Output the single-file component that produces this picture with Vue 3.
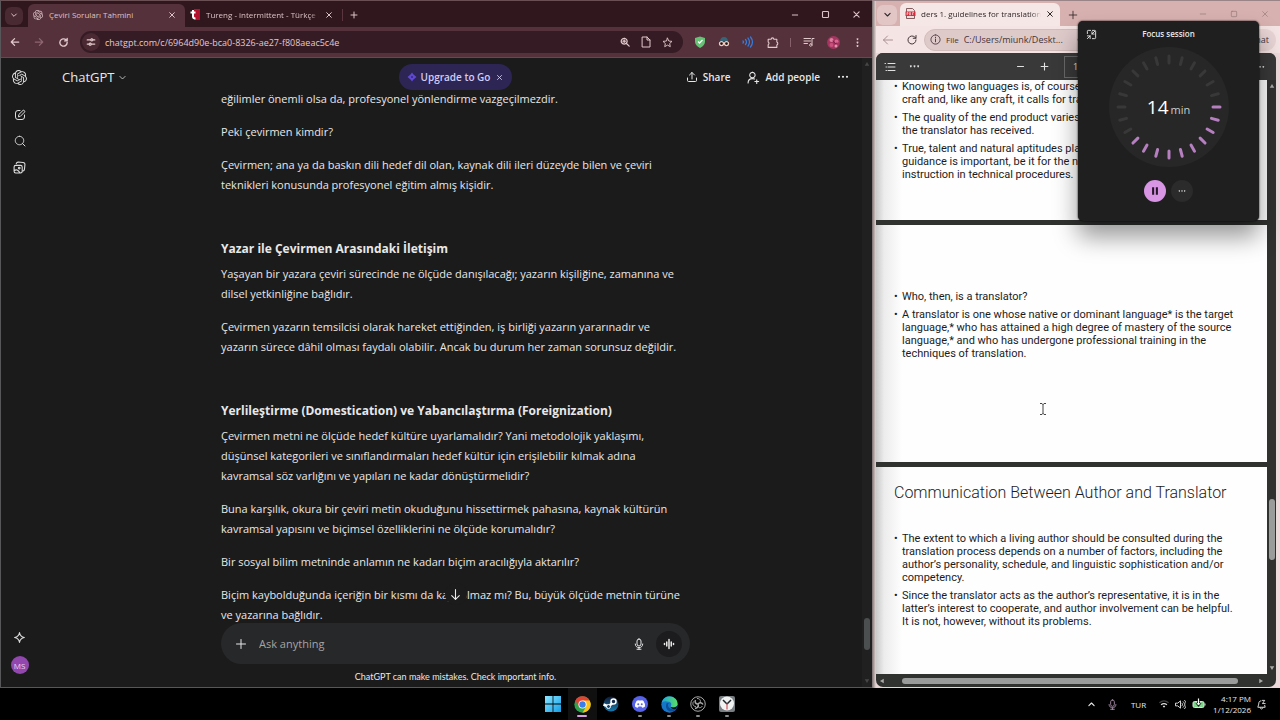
<script setup>
import { h } from 'vue'

const shapes = {
  down: 'M5 9l7 7 7-7',
  up: 'M5 15l7-7 7 7',
  close: 'M5 5l14 14M19 5L5 19',
  plus: 'M12 3v18M3 12h18',
  minus: 'M4 12h16',
  square: 'M6 4h12a2 2 0 0 1 2 2v12a2 2 0 0 1-2 2H6a2 2 0 0 1-2-2V6a2 2 0 0 1 2-2z',
  back: 'M21 12H3M11 4l-8 8 8 8',
  forward: 'M3 12h18M13 4l8 8-8 8',
  reload: 'M20 12a8 8 0 1 1-2.5-5.8L20 8.500M20 3v5.500h-5.500',
  tune: 'M3 7h8M17 7h4M3 17h4M13 17h8M14 4.500a2.500 2.500 0 1 0 .01 0M10 14.500a2.500 2.500 0 1 0 .01 0',
  zoomIn: 'M10 3a7 7 0 1 0 .01 0M15 15l7 7M10 7v6M7 10h6',
  page: 'M5 2h9l6 6v14H5zM14 2v6h6',
  star: 'M12 2.500l2.900 6.300 6.900.8-5.100 4.700 1.400 6.800L12 17.700l-6.100 3.400 1.400-6.800-5.100-4.700 6.900-.8z',
  puzzle: 'M4 6h5.500a2.500 2.500 0 0 1 5 0H20v5a3 3 0 0 1 0 5.500V21H4v-5a2.800 2.800 0 0 0 0-5z',
  music: 'M2 5h13M2 10h13M2 15h7M18 18V5h4M15.500 15.500a2.500 2.500 0 1 0 .01 0',
  share: 'M12 16V3M7 8l5-5 5 5M3 14v5a2 2 0 0 0 2 2h14a2 2 0 0 0 2-2v-5',
  person: 'M10 2.500a5 5 0 1 0 .01 0M2 22c0-5 3-8 8-8 1.500 0 3 .3 4 .8M18 16v7M14.500 19.500h7',
  compose: 'M12 3H8a5 5 0 0 0-5 5v8a5 5 0 0 0 5 5h8a5 5 0 0 0 5-5v-4M9 15l.7-4L18 2.800c1.700-1.500 4.700 1.500 3.200 3.200L13 14.300z',
  search: 'M11 2.500a8.500 8.500 0 1 0 .01 0M17 17l5 5',
  images: 'M5 8h9a3 3 0 0 1 3 3v8a3 3 0 0 1-3 3H5a3 3 0 0 1-3-3v-8a3 3 0 0 1 3-3zM6 5c.5-2 1.500-3 3.500-3l9 .8C21 3 22.200 4.500 22 7l-.8 8c-.2 2-1 3-2.500 3.500M2 18c4-3 7-2 11 4M11.500 11.500a1.500 1.500 0 1 0 .01 0',
  sparkle: 'M12 3c1 6 3 8 9 9-6 1-8 3-9 9-1-6-3-8-9-9 6-1 8-3 9-9z',
  mic: 'M12 2a4 4 0 0 1 4 4v6a4 4 0 0 1-8 0V6a4 4 0 0 1 4-4zM4.500 12c0 10 15 10 15 0M12 19v4M8 22.500h8',
  wave: 'M3 11v2M7.500 8v8M12 3v18M16.500 8v8M21 11v2',
  arrowDown: 'M12 3v18M5 14l7 7 7-7',
  list: 'M8 5h14M8 12h14M8 19h14M2 5h1M4 12h1M4 19h1',
  info: 'M12 2a10 10 0 1 0 .01 0M12 11v6M12 7v1',
  shrink: 'M3 10V5a2 2 0 0 1 2-2h5M14 3h5a2 2 0 0 1 2 2v14a2 2 0 0 1-2 2h-5M13 11l6-6M13 6v5h5M3 21l6-6M3 15h6v6',
  volume: 'M2 9h4l6-5v16l-6-5H2zM15 9c2 2 2 4 0 6M18 6c4 4 4 8 0 12M21 3c5 6 5 12 0 18',
  bell: 'M11 4C7 4 6 7 6 11l-2 7h16l-1-4M9 19c1 4 5 4 6 0M14 3h5l-5 7h6',
  openai: 'M22.2819 9.8211a5.9847 5.9847 0 0 0-.5157-4.9108 6.0462 6.0462 0 0 0-6.5098-2.9A6.0651 6.0651 0 0 0 4.9807 4.1818a5.9847 5.9847 0 0 0-3.9977 2.9 6.0462 6.0462 0 0 0 .7427 7.0966 5.98 5.98 0 0 0 .511 4.9107 6.051 6.051 0 0 0 6.5146 2.9001A5.9847 5.9847 0 0 0 13.2599 24a6.0557 6.0557 0 0 0 5.7718-4.2058 5.9894 5.9894 0 0 0 3.9977-2.9001 6.0557 6.0557 0 0 0-.7475-7.0729zm-9.022 12.6081a4.4755 4.4755 0 0 1-2.8764-1.0408l.1419-.0804 4.7783-2.7582a.7948.7948 0 0 0 .3927-.6813v-6.7369l2.02 1.1686a.071.071 0 0 1 .038.052v5.5826a4.504 4.504 0 0 1-4.4945 4.4944zm-9.6607-4.1254a4.4708 4.4708 0 0 1-.5346-3.0137l.142.0852 4.783 2.7582a.7712.7712 0 0 0 .7806 0l5.8428-3.3685v2.3324a.0804.0804 0 0 1-.0332.0615L9.74 19.9502a4.4992 4.4992 0 0 1-6.1408-1.6464zM2.3408 7.8956a4.485 4.485 0 0 1 2.3655-1.9728V11.6a.7664.7664 0 0 0 .3879.6765l5.8144 3.3543-2.0201 1.1685a.0757.0757 0 0 1-.071 0l-4.8303-2.7865A4.504 4.504 0 0 1 2.3408 7.872zm16.5963 3.8558L13.1038 8.364 15.1192 7.2a.0757.0757 0 0 1 .071 0l4.8303 2.7913a4.4944 4.4944 0 0 1-.6765 8.1042v-5.6772a.79.79 0 0 0-.407-.667zm2.0107-3.0231l-.142-.0852-4.7735-2.7818a.7759.7759 0 0 0-.7854 0L9.409 9.2297V6.8974a.0662.0662 0 0 1 .0284-.0615l4.8303-2.7866a4.4992 4.4992 0 0 1 6.6802 4.66zM8.3065 12.863l-2.02-1.1638a.0804.0804 0 0 1-.038-.0567V6.0742a4.4992 4.4992 0 0 1 7.3757-3.4537l-.142.0805L8.704 5.459a.7948.7948 0 0 0-.3927.6813zm1.0976-2.3654l2.602-1.4998 2.6069 1.4998v2.9994l-2.5974 1.4997-2.6067-1.4997Z',
  dots: 'M4 9.500a2 2 0 1 0 .01 0M12 9.500a2 2 0 1 0 .01 0M20 9.500a2 2 0 1 0 .01 0',
  dotsV: 'M12 2.500a2 2 0 1 0 .01 0M12 10a2 2 0 1 0 .01 0M12 17.500a2 2 0 1 0 .01 0',
  triUp: 'M12 4l9 15H3z',
  triDown: 'M12 20L3 5h18z',
  triLeft: 'M4 12L19 3v18z',
  triRight: 'M20 12L5 3v18z',
  pause: 'M5 3h5v18H5zM14 3h5v18h-5z',
}
const filled = ['openai', 'dots', 'dotsV', 'triUp', 'triDown', 'triLeft', 'triRight', 'pause']

const Icon = (props) =>
  h('svg', {
    viewBox: '0 0 24 24',
    width: props.size,
    height: props.size,
    'aria-hidden': 'true',
    fill: filled.includes(props.name) ? 'currentColor' : 'none',
    stroke: filled.includes(props.name) ? 'none' : 'currentColor',
    'stroke-width': props.weight || 2,
    'stroke-linecap': 'round',
    'stroke-linejoin': 'round',
  }, [h('path', { d: shapes[props.name] })])
Icon.props = ['name', 'size', 'weight']

const thread = [
  { lines: ['eğilimler önemli olsa da, profesyonel yönlendirme vazgeçilmezdir.'] },
  { lines: ['Peki çevirmen kimdir?'] },
  { lines: ['Çevirmen; ana ya da baskın dili hedef dil olan, kaynak dili ileri düzeyde bilen ve çeviri', 'teknikleri konusunda profesyonel eğitim almış kişidir.'] },
  { title: 'Yazar ile Çevirmen Arasındaki İletişim' },
  { lines: ['Yaşayan bir yazara çeviri sürecinde ne ölçüde danışılacağı; yazarın kişiliğine, zamanına ve', 'dilsel yetkinliğine bağlıdır.'] },
  { lines: ['Çevirmen yazarın temsilcisi olarak hareket ettiğinden, iş birliği yazarın yararınadır ve', 'yazarın sürece dâhil olması faydalı olabilir. Ancak bu durum her zaman sorunsuz değildir.'] },
  { title: 'Yerlileştirme (Domestication) ve Yabancılaştırma (Foreignization)' },
  { lines: ['Çevirmen metni ne ölçüde hedef kültüre uyarlamalıdır? Yani metodolojik yaklaşımı,', 'düşünsel kategorileri ve sınıflandırmaları hedef kültür için erişilebilir kılmak adına', 'kavramsal söz varlığını ve yapıları ne kadar dönüştürmelidir?'] },
  { lines: ['Buna karşılık, okura bir çeviri metin okuduğunu hissettirmek pahasına, kaynak kültürün', 'kavramsal yapısını ve biçimsel özelliklerini ne ölçüde korumalıdır?'] },
  { lines: ['Bir sosyal bilim metninde anlamın ne kadarı biçim aracılığıyla aktarılır?'] },
  { lines: ['Biçim kaybolduğunda içeriğin bir kısmı da kaybolmaz mı? Bu, büyük ölçüde metnin türüne', 've yazarına bağlıdır.'] },
]

const slides = [
  {
    kind: 'first',
    points: [
      ['Knowing two languages is, of course, not enough. It is a', 'craft and, like any craft, it calls for training.'],
      ['The quality of the end product varies with the training', 'the translator has received.'],
      ['True, talent and natural aptitudes play a role, but', 'guidance is important, be it for the novice or for', 'instruction in technical procedures.'],
    ],
  },
  {
    kind: 'second',
    points: [
      ['Who, then, is a translator?'],
      ['A translator is one whose native or dominant language* is the target', 'language,* who has attained a high degree of mastery of the source', 'language,* and who has undergone professional training in the', 'techniques of translation.'],
    ],
  },
  {
    kind: 'third',
    title: 'Communication Between Author and Translator',
    points: [
      ['The extent to which a living author should be consulted during the', 'translation process depends on a number of factors, including the', 'author’s personality, schedule, and linguistic sophistication and/or', 'competency.'],
      ['Since the translator acts as the author’s representative, it is in the', 'latter’s interest to cooperate, and author involvement can be helpful.', 'It is not, however, without its problems.'],
    ],
  },
]

const ticks = Array.from({ length: 24 }, (_, i) => ({ angle: i * 15, lit: i >= 6 && i <= 15 }))
</script>

<template>
  <div class="desktop">
    <div class="windows">
      <section class="chrome" aria-label="Chrome">
        <div class="tabstrip">
          <button class="tabmenu" aria-label="Search tabs"><Icon name="down" size="8" weight="3" /></button>
          <div class="tab active">
            <Icon name="openai" size="10" />
            <span class="tabname">Çeviri Soruları Tahmini</span>
            <button aria-label="Close tab"><Icon name="close" size="8" weight="3" /></button>
          </div>
          <div class="tab">
            <svg width="10" height="11" viewBox="0 0 20 22" aria-hidden="true"><path d="M8 0h12v22H8z" fill="#b3122e" /><path d="M6 2v13q0 4 5 4M1 7h10" fill="none" stroke="#fff" stroke-width="4" /></svg>
            <span class="tabname fade">Tureng - intermittent - Türkçe İ</span>
            <button aria-label="Close tab"><Icon name="close" size="8" weight="3" /></button>
          </div>
          <button class="newtab" aria-label="New tab"><Icon name="plus" size="8" weight="3" /></button>
          <div class="controls">
            <button aria-label="Minimize"><Icon name="minus" size="8" weight="3" /></button>
            <button aria-label="Maximize"><Icon name="square" size="9" weight="3" /></button>
            <button aria-label="Close"><Icon name="close" size="9" weight="3" /></button>
          </div>
        </div>
        <div class="toolbar">
          <button aria-label="Back"><Icon name="back" size="10" weight="3" /></button>
          <button class="off" aria-label="Forward"><Icon name="forward" size="10" weight="3" /></button>
          <button aria-label="Reload"><Icon name="reload" size="11" weight="3" /></button>
          <div class="address">
            <button class="site" aria-label="Site information"><Icon name="tune" size="10" weight="3" /></button>
            <input aria-label="Address" value="chatgpt.com/c/6964d90e-bca0-8326-ae27-f808aeac5c4e">
            <button aria-label="Zoom"><Icon name="zoomIn" size="10" weight="3" /></button>
            <button aria-label="Reading mode"><Icon name="page" size="12" weight="2" /></button>
            <button aria-label="Bookmark"><Icon name="star" size="11" weight="2" /></button>
          </div>
          <div class="extensions">
            <button aria-label="Ad blocker"><svg width="12" height="12" viewBox="0 0 24 24"><path d="M12 1l10 3v7c0 6-4 10-10 13C6 21 2 17 2 11V4z" fill="#66c274" /><path d="M8 11l3 3 6-6" fill="none" stroke="#fff" stroke-width="2.500" /></svg></button>
            <button aria-label="Incognito tools"><svg width="12" height="12" viewBox="0 0 24 24"><path d="M4 10q1-8 8-8t8 8z" fill="#376477" /><path d="M2 10h20v5H2z" fill="#252932" /><g fill="#17191e" stroke="#f2c9bd" stroke-width="2.500"><circle cx="7" cy="15" r="4" /><circle cx="17" cy="15" r="4" /></g></svg></button>
            <button aria-label="Read aloud"><svg width="12" height="12" viewBox="0 0 24 24" fill="none" stroke="#377bdc" stroke-width="2.500" stroke-linecap="round"><path d="M2 10q2 2 0 4M7 7q4 5 0 10M12 4q6 8 0 16M17 2q8 10 0 20" /></svg></button>
            <button aria-label="Extensions"><Icon name="puzzle" size="13" weight="2" /></button>
            <span class="rule"></span>
            <button aria-label="Media"><Icon name="music" size="12" weight="2" /></button>
            <button aria-label="Profile"><svg width="13" height="13" viewBox="0 0 26 26"><circle cx="13" cy="13" r="13" fill="#a53560" /><circle cx="9" cy="8" r="4" fill="#dd7f9f" /><circle cx="19" cy="11" r="4" fill="#d9668f" /><circle cx="9" cy="18" r="4" fill="#c9527d" /><circle cx="18" cy="20" r="3" fill="#e294ae" /><path d="M12 9l4 6 5-1" fill="none" stroke="#7b1d45" stroke-width="2" /></svg></button>
            <button aria-label="Menu"><Icon name="dotsV" size="11" /></button>
          </div>
        </div>

        <div class="chat">
          <nav class="rail" aria-label="Sidebar">
            <button aria-label="Home"><Icon name="openai" size="15" /></button>
            <button class="first" aria-label="New chat"><Icon name="compose" size="12" weight="2" /></button>
            <button aria-label="Search chats"><Icon name="search" size="12" weight="2" /></button>
            <button aria-label="Images"><Icon name="images" size="13" weight="2" /></button>
            <button class="last" aria-label="Upgrade"><Icon name="sparkle" size="13" weight="2" /></button>
            <button class="avatar">MS</button>
          </nav>
          <main class="main">
            <header class="head">
              <button class="model">ChatGPT <Icon name="down" size="9" weight="2" /></button>
              <div class="upgrade">
                <button><svg width="10" height="10" viewBox="0 0 20 20"><path d="M10 1l3 4 6 5-6 5-3 4-3-4-6-5 6-5z" fill="#6048d3" /><circle cx="10" cy="10" r="2" fill="#362a78" /></svg>Upgrade to Go</button>
                <button aria-label="Dismiss"><Icon name="close" size="7" weight="3" /></button>
              </div>
              <div class="actions">
                <button><Icon name="share" size="12" weight="2" />Share</button>
                <button><Icon name="person" size="13" weight="2" />Add people</button>
                <button aria-label="More"><Icon name="dots" size="12" /></button>
              </div>
            </header>
            <div class="scroll">
              <article class="column">
                <template v-for="(block, i) in thread" :key="i">
                  <h3 v-if="block.title">{{ block.title }}</h3>
                  <p v-else><span v-for="line in block.lines" :key="line">{{ line }}</span></p>
                </template>
              </article>
              <button class="jump" aria-label="Scroll to bottom"><Icon name="arrowDown" size="13" weight="2" /></button>
            </div>
            <form class="composer column" @submit.prevent>
              <button type="button" aria-label="Attach"><Icon name="plus" size="12" weight="2" /></button>
              <input aria-label="Message" placeholder="Ask anything">
              <button type="button" aria-label="Dictate"><Icon name="mic" size="12" weight="2" /></button>
              <button type="button" class="voice" aria-label="Voice mode"><Icon name="wave" size="12" weight="3" /></button>
            </form>
            <p class="note">ChatGPT can make mistakes. Check important info.</p>
          </main>
          <div class="bar chatbar" aria-hidden="true"><Icon name="triUp" size="6" /><i></i><Icon name="triDown" size="6" /></div>
        </div>
      </section>

      <section class="edge" aria-label="Edge">
        <div class="tabstrip">
          <button class="tabmenu" aria-label="Tab actions"><Icon name="down" size="9" weight="3" /></button>
          <div class="tab active">
            <svg width="11" height="11" viewBox="0 0 22 22"><path d="M3 1h12l4 4v16H3z" fill="#f3dede" stroke="#5c3135" stroke-width="1.500" /><path d="M1 7h20v9H1z" fill="#d22c3d" /><path d="M4 14V9h2v3H4M9 9v5h2V9zM15 14V9h3M15 12h2" fill="none" stroke="#fff" /></svg>
            <span class="tabname fade">ders 1. guidelines for translation o</span>
            <button aria-label="Close tab"><Icon name="close" size="8" weight="3" /></button>
          </div>
          <button class="newtab" aria-label="New tab"><Icon name="plus" size="10" weight="2" /></button>
          <div class="controls">
            <button aria-label="Minimize"><Icon name="minus" size="8" weight="2" /></button>
            <button aria-label="Maximize"><Icon name="square" size="8" weight="2" /></button>
            <button aria-label="Close"><Icon name="close" size="8" weight="2" /></button>
          </div>
        </div>
        <div class="toolbar">
          <button class="off" aria-label="Back"><Icon name="back" size="12" weight="2" /></button>
          <button aria-label="Reload"><Icon name="reload" size="12" weight="2" /></button>
          <div class="address">
            <Icon name="info" size="11" weight="2" /><span class="scheme">File</span>
            <input aria-label="Address" value="C:/Users/miunk/Deskt...">
            <button aria-label="Search page"><Icon name="search" size="10" weight="2" /></button>
          </div>
          <button class="copilot">Chat</button>
        </div>
        <div class="viewer">
          <div class="pdfbar">
            <button aria-label="Contents"><Icon name="list" size="12" weight="2" /></button>
            <button aria-label="More tools"><Icon name="dots" size="11" /></button>
            <button class="zoomout" aria-label="Zoom out"><Icon name="minus" size="9" weight="3" /></button>
            <button aria-label="Zoom in"><Icon name="plus" size="9" weight="3" /></button>
            <input aria-label="Page" value="18">
            <button class="moreright" aria-label="More"><Icon name="dots" size="10" /></button>
          </div>
          <div class="docrow">
            <div class="pages">
              <article v-for="slide in slides" :key="slide.kind" class="slide" :class="slide.kind">
                <h2 v-if="slide.title">{{ slide.title }}</h2>
                <ul>
                  <li v-for="(point, i) in slide.points" :key="i"><span v-for="line in point" :key="line">{{ line }}</span></li>
                </ul>
              </article>
              <svg class="caret" width="8" height="12" viewBox="0 0 8 12" fill="none" stroke="#444"><path d="M1 .5h2l1 1 1-1h2M4 1v10M1 11.500h2l1-1 1 1h2" /></svg>
            </div>
            <div class="bar pdfscroll" aria-hidden="true"><Icon name="triUp" size="6" /><i></i><Icon name="triDown" size="6" /></div>
          </div>
          <div class="hbar" aria-hidden="true"><Icon name="triLeft" size="6" /><i></i><Icon name="triRight" size="6" /></div>
        </div>
      </section>
    </div>

    <aside class="focus" aria-label="Focus session">
      <button class="compact" aria-label="Back to full view"><Icon name="shrink" size="11" weight="2" /></button>
      <h2>Focus session</h2>
      <div class="dial">
        <svg viewBox="0 0 120 120" aria-hidden="true">
          <circle cx="60" cy="60" r="60" fill="#272727" />
          <line v-for="t in ticks" :key="t.angle" x1="60" y1="9" x2="60" y2="16" stroke-width="3" stroke-linecap="round" :stroke="t.lit ? '#b57fc0' : '#383838'" :transform="`rotate(${t.angle} 60 60)`" />
        </svg>
        <p><b>14</b><span>min</span></p>
      </div>
      <div class="focusbtns">
        <button class="pause" aria-label="Pause"><Icon name="pause" size="10" /></button>
        <button aria-label="More options"><Icon name="dots" size="8" /></button>
      </div>
    </aside>

    <footer class="taskbar">
      <div class="apps">
        <button aria-label="Start"><svg width="16" height="16" viewBox="0 0 16 16"><defs><linearGradient id="win" x1="0" y1="0" x2="1" y2="1"><stop stop-color="#8be6ff" /><stop offset="1" stop-color="#119fe6" /></linearGradient></defs><path d="M0 0h7.600v7.600H0zM8.400 0H16v7.600H8.400zM0 8.400h7.600V16H0zM8.400 8.400H16V16H8.400z" fill="url(#win)" /></svg></button>
        <button class="current" aria-label="Chrome"><svg width="17" height="17" viewBox="0 0 48 48"><circle cx="24" cy="24" r="23" fill="#2fa24c" /><path d="M24 24L4 12.500A23 23 0 0 1 44 12.500z" fill="#e34335" /><path d="M24 12.500h20A23 23 0 0 1 24 47l10-17z" fill="#fbc117" /><path d="M4 12.500L14 30 24 13z" fill="#e34335" /><circle cx="24" cy="24" r="11.500" fill="#fff" /><circle cx="24" cy="24" r="9" fill="#3b7de9" /></svg></button>
        <button aria-label="Steam"><svg width="16" height="16" viewBox="0 0 32 32"><defs><linearGradient id="steam" x1="0" y1="0" x2="0" y2="1"><stop stop-color="#101b38" /><stop offset="1" stop-color="#167bad" /></linearGradient></defs><circle cx="16" cy="16" r="15" fill="url(#steam)" /><path d="M1 17l10 4 9-8" fill="none" stroke="#fff" stroke-width="5" /><circle cx="21" cy="11" r="5" fill="#15294b" stroke="#fff" stroke-width="3" /><circle cx="11" cy="21" r="4" fill="#15476c" stroke="#fff" stroke-width="2" /></svg></button>
        <button class="running" aria-label="Discord"><svg width="16" height="16" viewBox="0 0 32 32"><circle cx="16" cy="16" r="16" fill="#5663e8" /><path d="M9 10q3-2 5-1h4q3-1 5 1 4 6 3 11-3 3-6 2l-1-2h-6l-1 2q-3 1-6-2-1-5 3-11z" fill="#fff" /><circle cx="12.500" cy="16.500" r="2" fill="#5663e8" /><circle cx="19.500" cy="16.500" r="2" fill="#5663e8" /></svg></button>
        <button class="running" aria-label="Edge"><svg width="17" height="17" viewBox="0 0 32 32"><defs><linearGradient id="edge" x1="0" y1="0" x2="1" y2="0"><stop stop-color="#1ba6e0" /><stop offset="1" stop-color="#5be060" /></linearGradient></defs><circle cx="16" cy="16" r="15.500" fill="#1676c8" /><path d="M1 14C3 4 10 0 17 1c9 1 15 7 14 15-1 5-8 7-13 4 3-4 1-9-4-9C8 9 3 10 1 14z" fill="url(#edge)" /><path d="M11 13c-5 8 2 18 11 16 4-1 6-3 7-5-5 2-15 2-16-7 0-2 1-3 2-4z" fill="#0c4f9b" /><path d="M18 20c3 2 9 3 13-2l-2 6c-5 2-10 0-11-4z" fill="#07131c" /></svg></button>
        <button class="running" aria-label="OBS"><svg width="16" height="16" viewBox="0 0 32 32" fill="none" stroke="#a9a9a9" stroke-width="2"><circle cx="16" cy="16" r="14.500" /><path d="M16 16c-5 0-7-4-5-8M16 16c3-4 8-3 10 1M16 16c2 5-1 8-6 9" stroke-width="3" /><path d="M7 11c-3 6 0 10 5 10M14 5c6 0 8 4 6 8M25 20c-4 5-8 4-9 0" /></svg></button>
        <button class="running" aria-label="Clock"><svg width="16" height="16" viewBox="0 0 32 32"><rect width="32" height="32" rx="4" fill="#777d80" /><circle cx="16" cy="15" r="14" fill="#f1f2f2" /><path d="M16 16L8 8M16 16l8-8" stroke="#20252a" stroke-width="3" /><path d="M16 14v13" stroke="#c8373e" stroke-width="2" /></svg></button>
      </div>
      <div class="tray">
        <button aria-label="Hidden icons"><Icon name="up" size="9" weight="3" /></button>
        <button class="traymic" aria-label="Microphone"><Icon name="mic" size="11" weight="2" /></button>
        <button class="lang">TUR</button>
        <button class="status" aria-label="Network, volume, battery">
          <svg width="10" height="10" viewBox="0 0 24 24" fill="none" stroke-width="3"><path d="M1 9q11-9 22 0" stroke="#444" /><path d="M5 14q7-6 14 0" stroke="#ddd" /><path d="M9 17q3-2 6 0l-3 4z" fill="#eee" /></svg>
          <Icon name="volume" size="11" weight="2" />
          <svg width="14" height="12" viewBox="0 0 28 24"><rect x="2" y="7" width="22" height="12" rx="3" fill="#7fd48b" stroke="#d5e8d6" stroke-width="2" /><path d="M26 11v4" stroke="#d5e8d6" stroke-width="2" /><path d="M13 1v12M9 9l4 5 4-5" fill="none" stroke="#103015" stroke-width="5" /><path d="M13 1v12M9 9l4 5 4-5" fill="none" stroke="#fff" stroke-width="2" /></svg>
        </button>
        <button class="clock"><span>4:17 PM</span><span>1/12/2026</span></button>
        <button aria-label="Notifications"><Icon name="bell" size="11" weight="2" /></button>
      </div>
    </footer>
  </div>
</template>

<style>
html, body { margin: 0; background: #000; }
</style>

<style scoped>
.desktop { position: relative; display: flex; flex-direction: column; height: 100vh; overflow: hidden; font-family: "Open Sans", "Noto Sans", sans-serif; font-size: 9px; color: #e8e8e8; }
.windows { flex: 1; min-height: 0; display: grid; grid-template-columns: 109fr 51fr; }
* { box-sizing: border-box; }
button, input { font: inherit; color: inherit; background: none; border: 0; padding: 0; margin: 0; min-width: 0; }
button { display: inline-flex; align-items: center; justify-content: center; white-space: nowrap; flex: none; }
input { outline: 0; }
svg { flex: none; display: block; }
p, h2, h3, ul { margin: 0; padding: 0; }

.chrome { display: flex; flex-direction: column; min-width: 0; min-height: 0; border: 1px solid #57575a; border-top-color: #6a4f55; border-right: 0; background: #1b1b1c; }
.tabstrip { display: flex; align-items: center; flex: none; height: 26px; padding: 3px 0 0 4px; background: #2f171d; color: #ddc3c7; }
.tabmenu { width: 18px; height: 18px; border-radius: 6px; background: #492932; margin-right: 5px; padding-bottom: 2px; }
.tab { display: flex; align-items: center; gap: 6px; height: 23px; width: 157px; padding: 0 9px 2px 5px; border-radius: 6px 6px 0 0; font-size: 8px; }
.tab.active { background: #54313b; }
.tab .tabname { flex: 1; overflow: hidden; white-space: nowrap; }
.fade { mask-image: linear-gradient(90deg, #000 92%, transparent); }
.chrome .newtab { width: 22px; height: 12px; border-left: 1px solid #5a353f; margin: 0 0 2px; }
.controls { display: flex; margin-left: auto; padding-bottom: 2px; }
.controls button { width: 31px; height: 20px; }
.toolbar { display: flex; align-items: center; flex: none; height: 31px; padding: 0 3px 0 2px; background: #54313b; color: #e2c9cd; border-bottom: 1px solid #684750; }
.toolbar > button { width: 24px; height: 22px; }
.toolbar .off { color: #8d6670; }
.address { flex: 1; display: flex; align-items: center; gap: 10px; min-width: 0; height: 22px; margin-left: 5px; padding: 0 10px 0 2px; border-radius: 11px; background: #351b23; }
.address input { flex: 1; text-overflow: clip; }
.address .site { width: 18px; height: 18px; border-radius: 9px; background: #4b2933; margin-right: -5px; }
.extensions { display: flex; align-items: center; padding-left: 5px; }
.extensions button { width: 24px; height: 20px; }
.rule { width: 1px; height: 9px; margin: 0 6px; background: #86606a; }

.chat { position: relative; flex: 1; display: flex; min-height: 0; }
.rail { width: 38px; flex: none; display: flex; flex-direction: column; align-items: center; padding: 6px 1px 13px 0; color: #dcdcdc; }
.rail button { width: 26px; height: 26px; }
.rail .first { margin-top: 12px; }
.rail .last { margin-top: auto; }
.rail .avatar { width: 18px; height: 18px; margin-top: 6px; border-radius: 9px; background: #9147ad; color: #ecd3f1; font-size: 8px; }
.main { flex: 1; min-width: 0; display: flex; flex-direction: column; }
.head { display: grid; grid-template-columns: 1fr auto 1fr; align-items: center; flex: none; height: 31px; padding: 6px 23px 0 23px; }
.model { justify-self: start; gap: 4px; font-size: 13px; }
.upgrade { display: flex; gap: 6px; height: 26px; padding: 0 9px 0 8px; border-radius: 13px; background: #2d2554; color: #d3cdf5; font-size: 10px; font-weight: 600; }
.upgrade button { gap: 4px; }
.actions { justify-self: end; display: flex; gap: 17px; font-size: 10px; font-weight: 600; }
.actions button { gap: 5px; }
.scroll { position: relative; flex: 1; min-height: 0; overflow: hidden; }
.column { width: 56.3%; margin: 0 auto; }
article.column { font-size: 11px; line-height: 20px; }
.column p { margin-bottom: 13px; }
.column span { display: block; white-space: nowrap; }
.column h3 { margin: 44px 0 5px; font-size: 12px; line-height: 20px; font-weight: 700; white-space: nowrap; }
.jump { position: absolute; left: 50%; bottom: 18px; width: 22px; height: 22px; margin-left: -11px; border-radius: 11px; background: #1b1b1c; }
.composer { flex: none; display: flex; align-items: center; height: 41px; padding: 0 8px 0 14px; border-radius: 21px; background: #27282a; font-size: 11px; }
.composer input { flex: 1; margin-left: 12px; }
.composer input::placeholder { color: #a5a5a5; opacity: 1; }
.composer .voice { width: 26px; height: 26px; border-radius: 13px; background: #1c1c1e; margin-left: 11px; }
.note { flex: none; padding-top: 2px; line-height: 21px; text-align: center; font-family: Lato, sans-serif; font-size: 9px; }
.bar { display: flex; flex-direction: column; align-items: center; justify-content: space-between; padding: 3px 0; }
.bar i { width: 6px; border-radius: 3px; background: #999c9a; }
.chatbar { position: absolute; right: 0; top: 0; bottom: 0; width: 10px; background: #202020; color: #474747; }
.chatbar i { height: 32px; margin: auto 0 28px; background: #4b4f4f; }

.edge { display: flex; flex-direction: column; min-width: 0; min-height: 0; padding: 0 4px 1px 4px; border-top: 1px solid #9b8487; background: linear-gradient(90deg, #77706f, #e8d5d5 4px, #eedada); color: #493237; }
.edge .tabstrip { height: 25px; padding: 2px 0 0 1px; background: #d7b1af; color: #32282a; margin-right: -4px; }
.edge .tabmenu { width: 20px; height: 20px; background: #e2c6c5; margin-right: 3px; padding: 0; }
.edge .tab { width: 160px; background: #f6e7e7; padding-right: 6px; gap: 5px; }
.edge .newtab { width: 26px; height: 20px; }
.edge .controls { color: #947879; }
.edge .toolbar { height: 27px; padding: 0; background: #f5e4e4; color: #443539; border: 0; margin-right: -4px; }
.edge .toolbar .off { color: #a88f92; }
.edge .address { flex: none; width: 172px; margin-left: 0; padding: 0 8px 0 5px; gap: 5px; background: #dfcaca; border: 1px solid #d2bcbc; }
.edge .scheme { font-size: 8px; }
.edge .copilot { margin-left: auto; margin-right: 4px; width: 44px; border-radius: 11px; background: #e8d4d4; justify-content: flex-end; padding-right: 7px; }
.viewer { flex: 1; min-height: 0; display: flex; flex-direction: column; border-radius: 7px; overflow: hidden; background: #303230; color: #e1e1e1; }
.pdfbar { display: flex; align-items: center; flex: none; height: 27px; padding: 0 8px 0 2px; background: #383938; }
.pdfbar button { width: 24px; }
.pdfbar .zoomout { margin-left: 82px; }
.pdfbar input { width: 40px; height: 22px; margin-left: 8px; padding-left: 8px; border: 1px solid #686868; }
.pdfbar .moreright { margin-left: auto; margin-right: -4px; }
.docrow { flex: 1; min-height: 0; display: flex; }
.pages { position: relative; flex: 1; min-width: 0; overflow: hidden; display: flex; flex-direction: column; gap: 5px; }
.slide { overflow: hidden; padding-left: 18px; background: linear-gradient(90deg, #c9c9c9, #ececec 8px, #fefefe 26px); color: #1c1c1c; font-family: Roboto, "Open Sans", sans-serif; font-size: 11px; line-height: 13px; flex: none; }
.slide.first { height: 140px; }
.slide.second { height: 237px; padding-top: 65px; }
.slide.third { flex: 1; padding-top: 15px; }
.slide ul { list-style: none; }
.slide li { position: relative; padding-left: 8px; margin-bottom: 5px; }
.slide li::before { content: "•"; position: absolute; left: 0; }
.slide span { display: block; white-space: nowrap; }
.slide h2 { font-size: 16px; line-height: 22px; font-weight: 300; margin-bottom: 28px; white-space: nowrap; }
.caret { position: absolute; left: 163px; top: 323px; }
.pdfscroll { width: 9px; color: #aaa; }
.pdfscroll i { height: 61px; margin: auto 0 105px; }
.hbar { display: flex; align-items: center; justify-content: space-between; flex: none; height: 13px; padding: 0 12px 0 3px; color: #aaa; }
.hbar i { flex: 1; height: 6px; margin: 0 20px 0 17px; border-radius: 3px; background: #999c9a; }

.focus { position: absolute; top: 21px; right: 21px; width: 181px; height: 200px; display: flex; flex-direction: column; align-items: center; border-radius: 5px; background: #1f1f1f; box-shadow: 0 16px 24px #0006, 0 0 2px #000; }
.focus .compact { position: absolute; left: 8px; top: 8px; }
.focus h2 { margin-top: 6px; font-size: 8px; line-height: 13px; font-weight: 600; }
.dial { position: relative; width: 120px; height: 120px; margin-top: 7px; }
.dial p { position: absolute; inset: 0; display: flex; align-items: baseline; justify-content: center; gap: 2px; padding-top: 48px; line-height: 24px; }
.dial b { font-size: 19px; font-weight: 400; color: #fff; }
.dial span { font-size: 11px; color: #ccc; }
.focusbtns { display: flex; gap: 5px; margin-top: 13px; }
.focusbtns button { width: 22px; height: 22px; border-radius: 11px; background: #2b2b2b; }
.focusbtns .pause { background: #d795e4; color: #26152a; }

.taskbar { flex: none; height: 32px; display: grid; grid-template-columns: 1fr auto 1fr; align-items: center; background: #000; }
.apps { grid-column: 2; display: flex; }
.apps button { position: relative; width: 29px; height: 32px; }
.apps .current { background: #101010; }
.apps .running::after, .apps .current::after { content: ""; position: absolute; bottom: 3px; width: 4px; height: 2px; border-radius: 1px; background: #8b8b8b; }
.apps .current::after { width: 10px; background: #d9a0df; }
.tray { justify-self: end; display: flex; align-items: center; padding-right: 13px; font-size: 8px; }
.traymic { margin-left: 11px; color: #a78ba9; }
.lang { margin: 0 13px; }
.status { gap: 6px; }
.clock { flex-direction: column; align-items: flex-end; margin: 0 5px 0 7px; line-height: 11px; }
</style>
